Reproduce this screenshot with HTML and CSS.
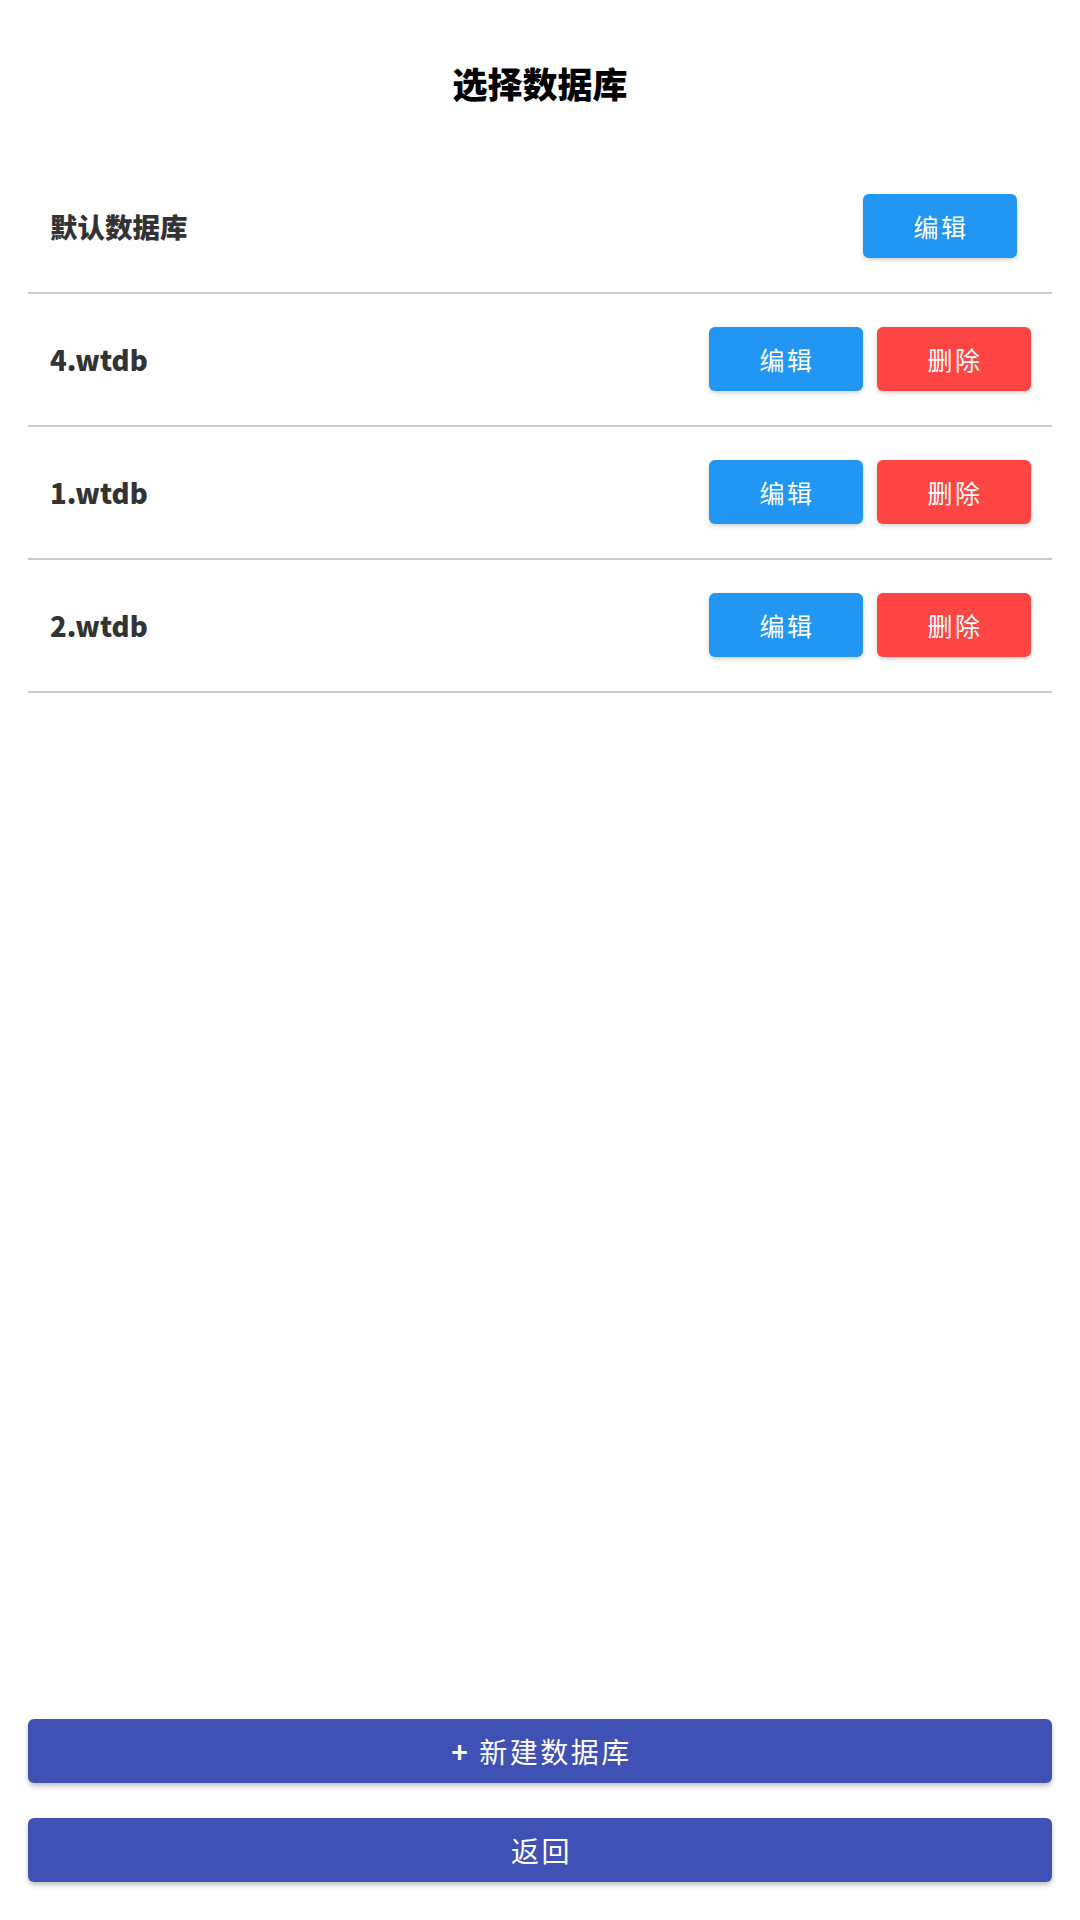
FILE: index.html
```html
<!DOCTYPE html>
<html lang="zh-CN">
<head>
<meta charset="utf-8">
<title>选择数据库</title>
<link rel="stylesheet" href="styles.css">
</head>
<body>
<div class="page">
  <header class="header"><h1 class="title">选择数据库</h1></header>
  <ul class="db-list">
    <li class="db-row">
      <span class="db-name">默认数据库</span>
      <div class="actions actions-single">
        <button class="btn btn-edit">编辑</button>
      </div>
    </li>
    <li class="db-row">
      <span class="db-name">4.wtdb</span>
      <div class="actions">
        <button class="btn btn-edit">编辑</button>
        <button class="btn btn-delete">删除</button>
      </div>
    </li>
    <li class="db-row">
      <span class="db-name">1.wtdb</span>
      <div class="actions">
        <button class="btn btn-edit">编辑</button>
        <button class="btn btn-delete">删除</button>
      </div>
    </li>
    <li class="db-row">
      <span class="db-name">2.wtdb</span>
      <div class="actions">
        <button class="btn btn-edit">编辑</button>
        <button class="btn btn-delete">删除</button>
      </div>
    </li>
  </ul>
  <div class="spacer"></div>
  <div class="footer">
    <button class="wide-btn"><span class="plus">+</span> 新建数据库</button>
    <button class="wide-btn">返回</button>
  </div>
</div>
</body>
</html>
```
FILE: styles.css
```css
* { box-sizing: border-box; }
html, body {
  margin: 0;
  padding: 0;
  background: #ffffff;
  font-family: "Noto Sans CJK SC", "Noto Sans", sans-serif;
}
.page {
  width: 1080px;
  height: 1920px;
  display: flex;
  flex-direction: column;
  padding: 0 28px;
}
.header {
  height: 161px;
  display: flex;
  align-items: center;
  justify-content: center;
  padding-top: 4px;
}
.title {
  margin: 0;
  font-size: 35px;
  font-weight: 900;
  color: #000;
  line-height: 1.2;
}
.db-list {
  list-style: none;
  margin: 0;
  padding: 0;
}
.db-row {
  display: flex;
  align-items: center;
  justify-content: space-between;
  padding: 33px 21px 34px 22px;
  border-bottom: 2px solid #cbcbcb;
}
.db-name {
  font-size: 27.5px;
  font-weight: 900;
  color: #333333;
}
.actions {
  display: flex;
  gap: 14px;
}
.actions-single {
  margin-right: 14px;
}
.btn {
  width: 154px;
  height: 64px;
  border: none;
  border-radius: 6px;
  color: #ffffff;
  font-family: "Noto Sans CJK SC", "Noto Sans", sans-serif;
  font-size: 25px;
  letter-spacing: 2.5px;
  padding: 0 0 0 2px;
  box-shadow: 0 2px 4px rgba(0, 0, 0, 0.18);
}
.btn-edit { background: #2196f3; }
.btn-delete { background: #ff4444; }
.spacer { flex: 1; }
.footer {
  display: flex;
  flex-direction: column;
  gap: 35px;
  padding-bottom: 38px;
}
.wide-btn {
  width: 100%;
  height: 64px;
  border: none;
  border-radius: 6px;
  background: #3f51b5;
  color: #ffffff;
  font-family: "Noto Sans CJK SC", "Noto Sans", sans-serif;
  font-size: 28px;
  letter-spacing: 2.5px;
  padding: 0 0 0 3px;
  box-shadow: 0 3px 5px rgba(0, 0, 0, 0.25);
}
.plus {
  font-weight: 700;
}
```
